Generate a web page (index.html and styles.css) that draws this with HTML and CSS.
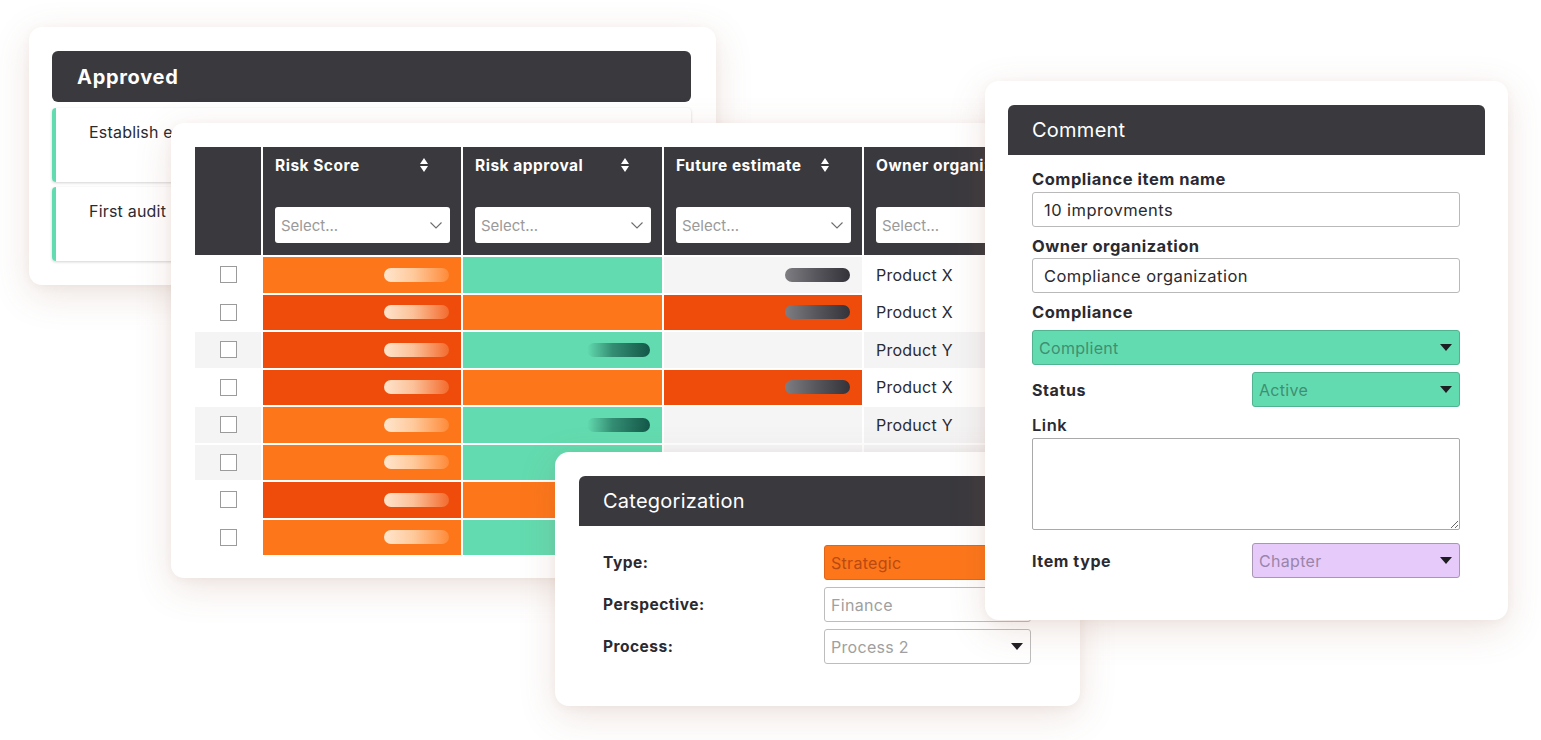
FILE: index.html
```html
<!DOCTYPE html>
<html lang="en">
<head>
<meta charset="utf-8">
<title>Compliance overview</title>
<link rel="stylesheet" href="styles.css">
</head>
<body>
<div class="canvas">

  <section class="card card-approved">
    <header class="card-head card-head-round bold-title">Approved</header>
    <div class="approved-item">Establish evaluation criteria</div>
    <div class="approved-item">First audit round planned</div>
  </section>

  <section class="card card-table">
    <div class="grid">
      <div class="th th-check"></div>
      <div class="th">
        <div class="th-title"><span>Risk Score</span><svg class="sort" viewBox="0 0 8 16"><path d="M0 7 L4 1 L8 7 Z M0 9 L8 9 L4 15 Z"/></svg></div>
        <div class="filter"><span>Select...</span><svg class="chev" viewBox="0 0 12 7"><polyline points="0.5,0.5 6,6 11.5,0.5"/></svg></div>
      </div>
      <div class="th">
        <div class="th-title"><span>Risk approval</span><svg class="sort" viewBox="0 0 8 16"><path d="M0 7 L4 1 L8 7 Z M0 9 L8 9 L4 15 Z"/></svg></div>
        <div class="filter"><span>Select...</span><svg class="chev" viewBox="0 0 12 7"><polyline points="0.5,0.5 6,6 11.5,0.5"/></svg></div>
      </div>
      <div class="th">
        <div class="th-title"><span>Future estimate</span><svg class="sort" viewBox="0 0 8 16"><path d="M0 7 L4 1 L8 7 Z M0 9 L8 9 L4 15 Z"/></svg></div>
        <div class="filter"><span>Select...</span><svg class="chev" viewBox="0 0 12 7"><polyline points="0.5,0.5 6,6 11.5,0.5"/></svg></div>
      </div>
      <div class="th">
        <div class="th-title th-title-plain"><span>Owner organization</span></div>
        <div class="filter"><span>Select...</span><svg class="chev" viewBox="0 0 12 7"><polyline points="0.5,0.5 6,6 11.5,0.5"/></svg></div>
      </div>

      <!-- row 1 -->
      <div class="td td-check"><span class="box"></span></div>
      <div class="td orange"><span class="pill pill-light"></span></div>
      <div class="td green"></div>
      <div class="td neutral"><span class="pill pill-dark"></span></div>
      <div class="td td-owner">Product X</div>
      <!-- row 2 -->
      <div class="td td-check"><span class="box"></span></div>
      <div class="td red"><span class="pill pill-light"></span></div>
      <div class="td orange"></div>
      <div class="td red"><span class="pill pill-dark"></span></div>
      <div class="td td-owner">Product X</div>
      <!-- row 3 -->
      <div class="td td-check striped"><span class="box"></span></div>
      <div class="td red"><span class="pill pill-light"></span></div>
      <div class="td green"><span class="pill pill-teal"></span></div>
      <div class="td neutral"></div>
      <div class="td td-owner striped">Product Y</div>
      <!-- row 4 -->
      <div class="td td-check"><span class="box"></span></div>
      <div class="td red"><span class="pill pill-light"></span></div>
      <div class="td orange"></div>
      <div class="td red"><span class="pill pill-dark"></span></div>
      <div class="td td-owner">Product X</div>
      <!-- row 5 -->
      <div class="td td-check striped"><span class="box"></span></div>
      <div class="td orange"><span class="pill pill-light"></span></div>
      <div class="td green"><span class="pill pill-teal"></span></div>
      <div class="td neutral"></div>
      <div class="td td-owner striped">Product Y</div>
      <!-- row 6 -->
      <div class="td td-check striped"><span class="box"></span></div>
      <div class="td orange"><span class="pill pill-light"></span></div>
      <div class="td green"></div>
      <div class="td neutral"></div>
      <div class="td td-owner striped">Product X</div>
      <!-- row 7 -->
      <div class="td td-check"><span class="box"></span></div>
      <div class="td red"><span class="pill pill-light"></span></div>
      <div class="td orange"></div>
      <div class="td neutral"></div>
      <div class="td td-owner">Product Y</div>
      <!-- row 8 -->
      <div class="td td-check"><span class="box"></span></div>
      <div class="td orange"><span class="pill pill-light"></span></div>
      <div class="td green"></div>
      <div class="td neutral"></div>
      <div class="td td-owner">Product X</div>
    </div>
  </section>

  <section class="card card-cat">
    <header class="card-head card-head-top">Categorization</header>
    <div class="cat-grid">
      <div class="cat-label">Type:</div>
      <div class="ctl ctl-orange">Strategic</div>
      <div class="cat-label">Perspective:</div>
      <div class="ctl ctl-plain">Finance</div>
      <div class="cat-label">Process:</div>
      <div class="ctl ctl-plain">Process 2<svg class="tri" viewBox="0 0 12 7"><path d="M0 0 L12 0 L6 7 Z"/></svg></div>
    </div>
  </section>

  <section class="card card-comment">
    <header class="card-head card-head-top">Comment</header>
    <div class="form">
      <div class="f-label f-first">Compliance item name</div>
      <div class="f-input">10 improvments</div>
      <div class="f-label">Owner organization</div>
      <div class="f-input">Compliance organization</div>
      <div class="f-label">Compliance</div>
      <div class="ctl ctl-green ctl-wide">Complient<svg class="tri" viewBox="0 0 12 7"><path d="M0 0 L12 0 L6 7 Z"/></svg></div>
      <div class="f-row f-row-status">
        <div class="f-row-label">Status</div>
        <div class="ctl ctl-green">Active<svg class="tri" viewBox="0 0 12 7"><path d="M0 0 L12 0 L6 7 Z"/></svg></div>
      </div>
      <div class="f-label f-link">Link</div>
      <textarea class="f-textarea"></textarea>
      <div class="f-row f-row-type">
        <div class="f-row-label">Item type</div>
        <div class="ctl ctl-purple">Chapter<svg class="tri" viewBox="0 0 12 7"><path d="M0 0 L12 0 L6 7 Z"/></svg></div>
      </div>
    </div>
  </section>

</div>
</body>
</html>
```

FILE: styles.css
```css
* { box-sizing: border-box; }

html, body {
  margin: 0;
  padding: 0;
  background: #ffffff;
}

body {
  font-family: "Inter", "DejaVu Sans", sans-serif;
  color: #2b2a30;
}

.canvas {
  position: relative;
  width: 1541px;
  height: 740px;
  overflow: hidden;
}

/* ---------- cards ---------- */
.card {
  position: absolute;
  background: #ffffff;
  border-radius: 13px;
  box-shadow: 0 10px 36px rgba(150, 95, 70, 0.17), 0 2px 8px rgba(150, 95, 70, 0.06);
}

.card-head {
  background: #3a393e;
  color: #ffffff;
  height: 50px;
  display: flex;
  align-items: center;
  padding-left: 24px;
  font-size: 20px;
  font-weight: 400;
  letter-spacing: 0.25px;
}

.card-head-round { border-radius: 6px; }
.card-head-top { border-radius: 6px 6px 0 0; }

.bold-title {
  font-weight: 700;
  height: 51px;
  padding-left: 25px;
  letter-spacing: 0.7px;
}

/* ---------- approved ---------- */
.card-approved {
  left: 29px;
  top: 27px;
  width: 687px;
  height: 258px;
  padding: 24px 25px 0 23px;
  z-index: 1;
}

.approved-item {
  height: 74px;
  margin-top: 6px;
  padding: 12px 0 0 33px;
  font-size: 16px;
  line-height: 24px;
  letter-spacing: 0.2px;
  color: #2b2a30;
  border-left: 4px solid #63dbb0;
  border-radius: 4px;
  box-shadow: 0 1px 3px rgba(0, 0, 0, 0.18);
}
.approved-item + .approved-item { margin-top: 5px; }

/* ---------- table ---------- */
.card-table {
  left: 171px;
  top: 123px;
  width: 880px;
  height: 455px;
  padding: 24px;
  z-index: 2;
}

.grid {
  display: grid;
  grid-template-columns: 66px 198px 199px 198px 1fr;
  grid-template-rows: 108px repeat(8, 35.5px);
  column-gap: 2px;
  row-gap: 2px;
  background: #ffffff;
}

.th {
  background: #3a393e;
  color: #ffffff;
  padding: 8px 11px 0 12px;
  display: flex;
  flex-direction: column;
}

.th-title {
  display: flex;
  align-items: center;
  justify-content: space-between;
  height: 20px;
  font-size: 15.5px;
  font-weight: 700;
  letter-spacing: 0.5px;
  white-space: nowrap;
  padding-right: 22px;
}

.th-title-plain { padding-right: 0; }

.sort {
  width: 8px;
  height: 16px;
  fill: #ffffff;
  flex: none;
}

.filter {
  margin-top: 32px;
  height: 36px;
  background: #ffffff;
  border-radius: 3px;
  display: flex;
  align-items: center;
  justify-content: space-between;
  padding: 0 8px 0 6px;
  color: #9a9a9a;
  font-size: 15px;
  min-width: 175px;
}

.chev {
  width: 12px;
  height: 7px;
  fill: none;
  stroke: #6d6d6d;
  stroke-width: 1.1;
  flex: none;
}

.td {
  display: flex;
  align-items: center;
  justify-content: flex-end;
  padding-right: 12px;
}

.td-check {
  justify-content: center;
  padding: 0;
  background: #ffffff;
}

.td-owner {
  justify-content: flex-start;
  padding-left: 12px;
  font-size: 16px;
  letter-spacing: 0.25px;
  color: #2b2a30;
  background: #ffffff;
  white-space: nowrap;
}

.striped { background: #f4f4f5; }

.box {
  width: 17px;
  height: 17px;
  border: 1.5px solid #9b9b9b;
  background: #ffffff;
}

.orange  { background: #fd761a; }
.red     { background: #ef4c0b; }
.green   { background: #63dbb0; }
.neutral { background: #f5f5f6; }

.pill {
  width: 65px;
  height: 14px;
  border-radius: 7px;
}

.pill-light {
  background: linear-gradient(90deg, rgba(255, 236, 214, 0.95) 0%, rgba(255, 222, 188, 0.8) 45%, rgba(255, 200, 150, 0.25) 100%);
}

.pill-teal {
  width: 63px;
  background: linear-gradient(90deg, rgba(21, 90, 75, 0) 0%, rgba(21, 90, 75, 0.6) 40%, #135748 100%);
}

.pill-dark {
  background: linear-gradient(90deg, #7e7d82 0%, #56555b 50%, #343339 100%);
}

/* ---------- categorization ---------- */
.card-cat {
  left: 555px;
  top: 452px;
  width: 525px;
  height: 254px;
  padding: 24px 24px 0 24px;
  border-radius: 14px;
  z-index: 3;
}

.cat-grid {
  display: grid;
  grid-template-columns: 221px 207px;
  grid-auto-rows: 35px;
  row-gap: 7px;
  margin-top: 19px;
  padding-left: 24px;
  align-items: center;
}

.cat-label {
  font-size: 15.5px;
  font-weight: 700;
  letter-spacing: 0.5px;
  color: #2b2a30;
}

/* generic controls */
.ctl {
  height: 35px;
  border-radius: 3px;
  display: flex;
  align-items: center;
  justify-content: space-between;
  padding: 0 7px 0 6px;
  font-size: 16px;
  letter-spacing: 0.3px;
  border: 1px solid #bdbdbd;
  background: #ffffff;
  color: #9a9a9a;
}

.tri {
  width: 12px;
  height: 7px;
  fill: #1e1e22;
  flex: none;
}

.ctl-orange {
  background: #fd761a;
  border-color: #e0651a;
  color: #b94a12;
}

.ctl-plain { color: #a0a0a0; }

.ctl-green {
  background: #63dbb0;
  border-color: #4fb48f;
  color: #3f8f72;
}

.ctl-purple {
  background: #e6cbfa;
  border-color: #a896b4;
  color: #9a84aa;
}

/* ---------- comment ---------- */
.card-comment {
  left: 985px;
  top: 81px;
  width: 523px;
  height: 539px;
  padding: 24px 23px 0 23px;
  border-radius: 14px;
  z-index: 4;
}

.form {
  display: flex;
  flex-direction: column;
  padding: 0 25px 0 24px;
}

.f-label {
  font-size: 16.5px;
  font-weight: 700;
  letter-spacing: 0.5px;
  line-height: 22px;
  margin-top: 8px;
  margin-bottom: 1px;
  color: #2b2a30;
}

.f-first { margin-top: 13px; margin-bottom: 2px; }

.f-input {
  height: 35px;
  border: 1px solid #b9b9b9;
  border-radius: 3px;
  display: flex;
  align-items: center;
  padding-left: 11px;
  font-size: 16.5px;
  letter-spacing: 0.45px;
  color: #2b2a30;
}

.ctl-wide { margin-top: 6px; }

.f-row {
  display: grid;
  grid-template-columns: 1fr 208px;
  align-items: center;
}

.f-row-status { margin-top: 7px; }
.f-row-type { margin-top: 13px; }

.f-row-label {
  font-size: 16px;
  font-weight: 700;
  letter-spacing: 0.6px;
  color: #2b2a30;
}

.f-link {
  font-weight: 600;
  margin-top: 7px;
  margin-bottom: 2px;
}

.f-textarea {
  height: 92px;
  width: 100%;
  border: 1px solid #a9a9a9;
  border-radius: 2px;
  resize: vertical;
  font-family: inherit;
  margin: 0;
  display: block;
}
```
